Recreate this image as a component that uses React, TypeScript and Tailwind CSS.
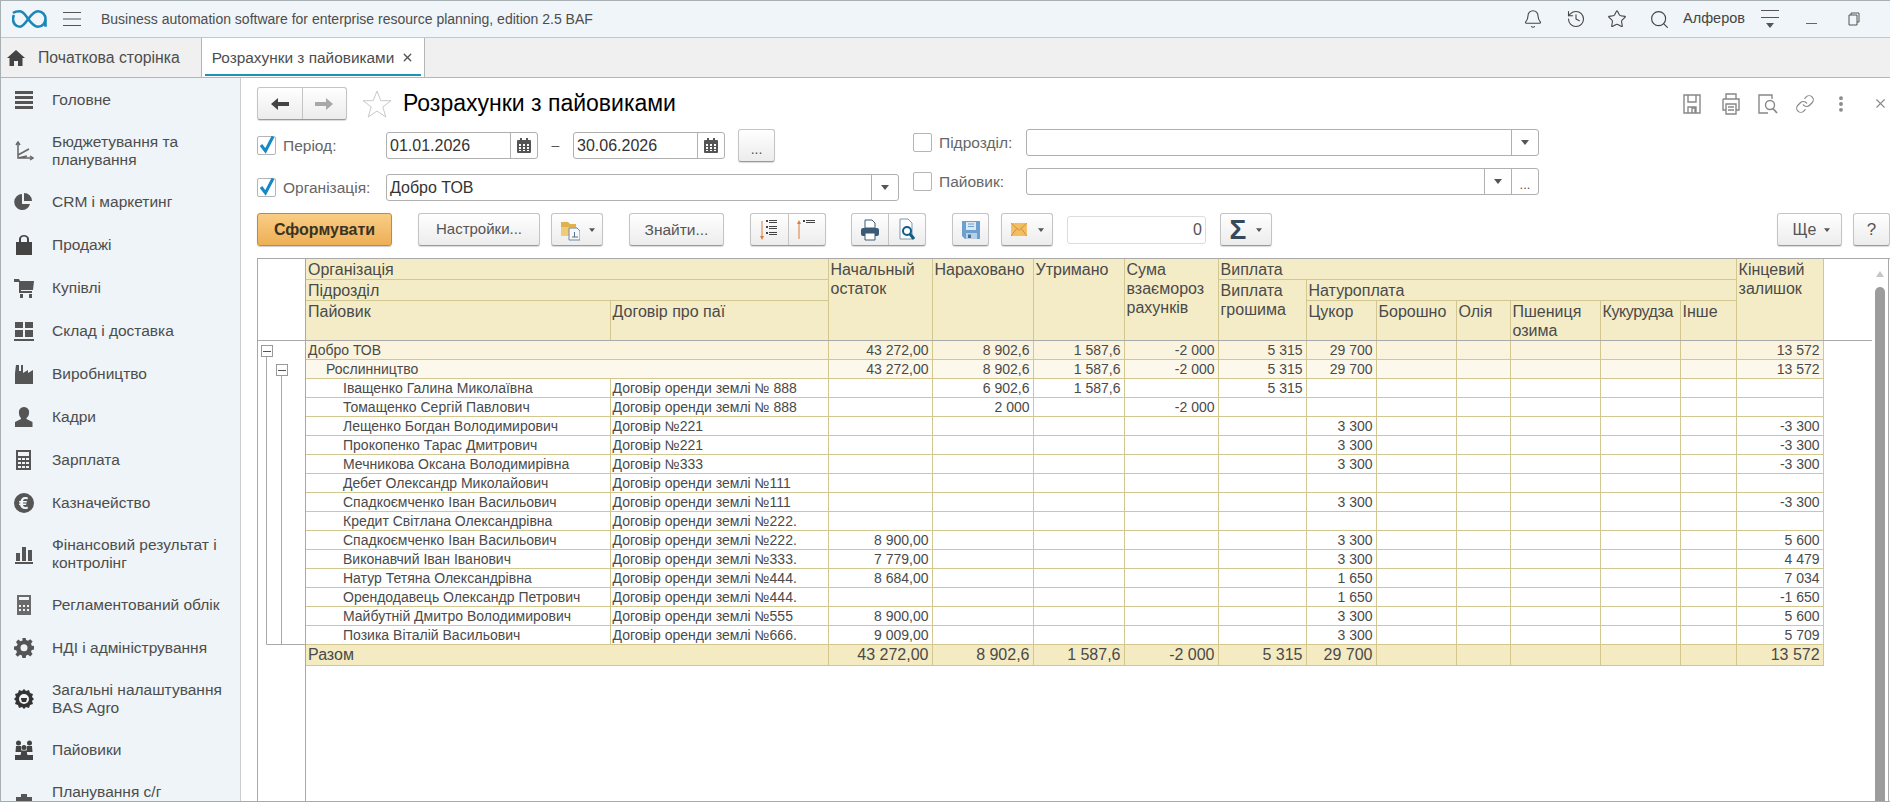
import { Bell, History, Link, MoreVertical, Search, Star, X } from 'lucide-react';

const font = { fontFamily: '"Liberation Sans", Arial, sans-serif' };

function Caret({ small }: { small?: boolean }) {
  return (
    <svg width={small ? 6 : 8} height={small ? 4 : 5} viewBox="0 0 8 5" className="shrink-0">
      <path d="M0 0h8L4 5z" fill="#555" />
    </svg>
  );
}

function Cal() {
  return (
    <svg width="14" height="15" viewBox="0 0 14 15">
      <path d="M1 2h2V0h2v2h4V0h2v2h2a1 1 0 0 1 1 1v11a1 1 0 0 1-1 1H1a1 1 0 0 1-1-1V3a1 1 0 0 1 1-1z" fill="#555" />
      <path d="M2 6h2v2H2zM6 6h2v2H6zM10 6h2v2h-2zM2 9h2v2H2zM6 9h2v2H6zM10 9h2v2h-2zM2 12h2v1H2zM6 12h2v1H6zM10 12h2v1h-2z" fill="#fff" />
    </svg>
  );
}

function Check({ on }: { on: boolean }) {
  return (
    <span className="relative block h-[19px] w-[19px] shrink-0 rounded-[2px] border border-[#b5b5b5] bg-white">
      {on && (
        <svg width="18" height="20" viewBox="0 0 18 20" className="absolute left-0 top-[-3px]">
          <path d="M3 11l4.500 6L15 2.500" fill="none" stroke="#1389c8" strokeWidth="3" />
        </svg>
      )}
    </span>
  );
}

const navIcons: Record<string, JSX.Element> = {
  menu: <path d="M1 1h18v3H1zM1 6h18v3H1zM1 11h18v3H1zM1 16h18v3H1z" fill="#555" />,
  chart: (
    <g fill="none" stroke="#666" strokeWidth="1.500">
      <path d="M4 1v16h15M4 14l11-6M4 17l9-2" />
      <path d="M2 4l2-3 2 3M16 15l3 2-3 2" />
    </g>
  ),
  pie: <path d="M8 2a8 8 0 1 0 8 10H8zM10 1v8h8a8 8 0 0 0-8-8z" fill="#555" />,
  bag: <path d="M2 7h3V4a5 4 0 0 1 10 0v3h3v13H2zM7 7h6V4a3 2.500 0 0 0-6 0z" fill="#444" fillRule="evenodd" />,
  cart: <path d="M0 1h5l1 2h14l-1 9H7v1h11v2H5V4H0zM6 16h3v4H6zM15 16h3v4h-3z" fill="#555" />,
  boxes: <path d="M1 1h8v6H1zM11 1h8v6h-8zM1 9h8v7H1zM11 9h8v7h-8zM0 18h20v2H0z" fill="#555" />,
  factory: <path d="M2 1h3v6h2V1h2v8l5-3v3l5-3v14H1V9z" fill="#555" />,
  user: <path d="M10 0a5 5 0 0 1 5 6c0 3-1.500 4-2.500 5v1l6 3v5H1v-5l6-3v-1C6 10 5 9 5 6a5 5 0 0 1 5-6z" fill="#555" />,
  calc: <path d="M2 0h15v20H2zM4 2v4h11V2zM4 8v2h3V8zM8 8v2h3V8zM12 8v2h3V8zM4 12v2h3v-2zM8 12v2h3v-2zM12 12v2h3v-2zM4 16v2h3v-2zM8 16v2h3v-2zM12 16v2h3v-2z" fill="#555" fillRule="evenodd" />,
  euro: <path d="M10 0a10 10 0 1 0 0 20 10 10 0 0 0 0-20zm1 4c2 0 3 .5 3 .5l-.6 2S12.500 6 11 6c-1 0-2 1-2 2h4l-.3 1.500H9v1h3.500L12 12H9c.3 1 1 2 2.500 2 1 0 2-.5 2-.5l.5 2s-1 .5-3 .5c-3 0-4.500-2-5-4H5v-1.500h1.200v-1H5V8h1.500C7 6 8.500 4 11 4z" fill="#555" fillRule="evenodd" />,
  bars: <path d="M2 9h4v8H2zM8 3h4v14H8zM14 6h4v11h-4zM1 18h18v2H1z" fill="#555" />,
  till: <path d="M3 0h14v20H3zM5 2v3h10V2zM5 10v2h2v-2zM9 10v2h2v-2zM13 10v2h2v-2zM5 14v2h2v-2zM9 14v2h2v-2zM13 14v2h2v-2z" fill="#6a6a6a" fillRule="evenodd" />,
  gear: <path d="M8.400 0h3.200l.5 2.800 1.900.8L16.300 2l2.300 2.300-1.600 2.300.8 1.900 2.800.5v3.200l-2.800.5-.8 1.900 1.600 2.300-2.300 2.300-2.300-1.600-1.900.8-.5 2.800H8.400l-.5-2.800-1.900-.8L3.700 19.600 1.400 17.300 3 15l-.8-1.900L0 12.600V9.400l2.800-.5L3.600 7 2 4.700 4.300 2.400 6.600 4l1.900-.8zM10 7a3.500 3.500 0 1 0 0 7 3.500 3.500 0 0 0 0-7z" fill="#555" fillRule="evenodd" transform="translate(0 -.8)" />,
  cog: <path d="M10 0l2 2 3-1 1 3 3 1-1 3 2 2-2 2 1 3-3 1-1 3-3-1-2 2-2-2-3 1-1-3-3-1 1-3-2-2 2-2-1-3 3-1 1-3 3 1zM10 5a5 5 0 1 0 0 10 5 5 0 0 0 0-10zM7 9h6v1l-1 3H8L7 10z" fill="#333" fillRule="evenodd" />,
  people: (
    <g fill="#444">
      <circle cx="4.500" cy="3" r="2.500" />
      <circle cx="15.500" cy="3" r="2.500" />
      <circle cx="10" cy="7.500" r="2.500" />
      <path d="M2 6h5l.5 6h-6zM13 6h5l.5 6h-6zM7.500 10.500h5l1 5h-7zM1 15h18v5H1z" />
    </g>
  ),
  plan: <path d="M2 6h16v8H2zM7 3h6v3H7z" fill="#555" />,
};

const navItems = [
  { label: 'Головне', icon: 'menu' },
  { label: 'Бюджетування та планування', icon: 'chart', two: true },
  { label: 'CRM і маркетинг', icon: 'pie' },
  { label: 'Продажі', icon: 'bag' },
  { label: 'Купівлі', icon: 'cart' },
  { label: 'Склад і доставка', icon: 'boxes' },
  { label: 'Виробництво', icon: 'factory' },
  { label: 'Кадри', icon: 'user' },
  { label: 'Зарплата', icon: 'calc' },
  { label: 'Казначейство', icon: 'euro' },
  { label: 'Фінансовий результат і контролінг', icon: 'bars', two: true },
  { label: 'Регламентований облік', icon: 'till' },
  { label: 'НДІ і адміністрування', icon: 'gear' },
  { label: 'Загальні налаштування BAS Agro', icon: 'cog', two: true },
  { label: 'Пайовики', icon: 'people' },
  { label: 'Планування с/г', icon: 'plan', two: true },
];

function Sidebar() {
  return (
    <aside className="h-full w-[240px] shrink-0 overflow-hidden border-r border-[#c9cdd0] bg-[#eef4f7] pl-[13px] text-[#4d4d4d]">
      {navItems.map((item) => (
        <div key={item.label} className={`flex items-center ${item.two ? 'h-[59px]' : 'h-[43px]'}`}>
          <svg width="20" height="20" viewBox="0 0 20 20" className="shrink-0">
            {navIcons[item.icon]}
          </svg>
          <span className={`ml-[18px] w-[185px] text-[15.5px] leading-[18px] ${item.two ? 'min-h-[36px]' : ''}`}>{item.label}</span>
        </div>
      ))}
    </aside>
  );
}

const btn =
  'flex h-[33px] items-center justify-center rounded-[3px] border border-[#c4c4c4] border-b-[#9a9a9a] bg-gradient-to-b from-white to-[#ececec] text-[#555] shadow-[0_1px_1px_rgba(0,0,0,0.15)]';

function FieldBox({ w, value, parts }: { w: string; value?: string; parts: JSX.Element[] }) {
  return (
    <div className={`flex h-[27px] shrink-0 items-stretch rounded-[3px] border border-[#b0b0b0] bg-white ${w}`}>
      <span className="flex-1 pl-[3px] text-[16px] leading-[26px] text-[#333]">{value}</span>
      {parts.map((p, i) => (
        <span key={i} className="flex w-[27px] items-center justify-center border-l border-[#b0b0b0]">
          {p}
        </span>
      ))}
    </div>
  );
}

const label = 'ml-[7px] pt-[1px] text-[15.5px] text-[#666]';

function Filters() {
  return (
    <div className="flex">
      <div className="w-[656px] shrink-0">
        <div className="flex h-[33px] items-center">
          <Check on />
          <span className={`${label} w-[103px]`}>Період:</span>
          <FieldBox w="w-[152px]" value="01.01.2026" parts={[<Cal key="c" />]} />
          <span className="w-[35px] text-center text-[14px] text-[#555]">–</span>
          <FieldBox w="w-[152px]" value="30.06.2026" parts={[<Cal key="c" />]} />
          <button className={`${btn} ml-[13px] w-[37px] pt-[6px] text-[14px] leading-none`}>...</button>
        </div>
        <div className="mt-[12px] flex h-[27px] items-center">
          <Check on />
          <span className={`${label} w-[103px]`}>Організація:</span>
          <FieldBox w="w-[513px]" value="Добро ТОВ" parts={[<Caret key="c" />]} />
        </div>
      </div>
      <div>
        <div className="flex h-[27px] items-center">
          <Check on={false} />
          <span className={`${label} w-[87px]`}>Підрозділ:</span>
          <FieldBox w="w-[513px]" parts={[<Caret key="c" />]} />
        </div>
        <div className="mt-[12px] flex h-[27px] items-center">
          <Check on={false} />
          <span className={`${label} w-[87px]`}>Пайовик:</span>
          <FieldBox w="w-[513px]" parts={[<Caret key="c" />, <span key="d" className="pt-[6px] text-[13px] leading-none text-[#555]">...</span>]} />
        </div>
      </div>
    </div>
  );
}

function SortIcon({ up }: { up?: boolean }) {
  return (
    <svg width="22" height="22" viewBox="0 0 22 22">
      <path d={up ? 'M3 20V4' : 'M4 2v16'} stroke="#e07b39" />
      <path d={up ? 'M3 1l-2 4h4z' : 'M4 21l-2-4h4z'} fill="#e07b39" />
      {up ? (
        <path d="M7 1h2v2H7zM10 1h9v1h-9zM10 3h9v1h-9z" fill="#444" />
      ) : (
        <path d="M8 1h2v2H8zM11 1h8v1h-8zM11 3h8v1h-8zM8 7h2v2H8zM11 7h8v1h-8zM11 9h8v1h-8zM8 13h2v2H8zM11 13h8v1h-8zM11 15h8v1h-8z" fill="#444" />
      )}
    </svg>
  );
}

function Printer() {
  return (
    <svg width="20" height="22" viewBox="0 0 20 22">
      <path d="M5 1h7l3 3v5H5z" fill="#fff" stroke="#3b5a75" />
      <rect x="1" y="9" width="18" height="8" rx="2" fill="#3b5a75" />
      <path d="M5 14h10v7H5z" fill="#fff" stroke="#3b5a75" />
    </svg>
  );
}

function Preview() {
  return (
    <svg width="20" height="24" viewBox="0 0 20 24">
      <path d="M3 1h8l4 4v16H3z" fill="#fff" stroke="#7d98ad" />
      <circle cx="10" cy="13" r="4" fill="none" stroke="#0f5e86" strokeWidth="2" />
      <path d="M13 16l4 5" stroke="#0f5e86" strokeWidth="3" />
    </svg>
  );
}

function Toolbar() {
  return (
    <div className="mt-[12px] flex h-[33px] items-center">
      <button className="flex h-[33px] w-[135px] items-center justify-center rounded-[3px] border border-[#c98a2c] bg-gradient-to-b from-[#f8cd85] to-[#eeaf55] text-[16px] font-bold text-[#3b3320] shadow-[0_1px_1px_rgba(0,0,0,0.2)]">
        Сформувати
      </button>
      <button className={`${btn} ml-[26px] w-[122px] text-[15px]`}>Настройки...</button>
      <button className={`${btn} ml-[11px] w-[52px] gap-[9px]`}>
        <svg width="20" height="22" viewBox="0 0 20 22">
          <path d="M1 3h7l2 2h6v4H1z" fill="#e2b04c" />
          <path d="M1 8h16v9H1z" fill="#f2cb78" />
          <path d="M9 9h8l3 3v9H9z" fill="#f6f8fa" stroke="#6f8aa0" />
          <path d="M14.500 13v5M12 18h6" stroke="#56738a" />
        </svg>
        <Caret small />
      </button>
      <button className={`${btn} ml-[26px] w-[95px] text-[15.5px]`}>Знайти...</button>
      <div className={`${btn} ml-[26px] w-[76px] overflow-hidden`}>
        <span className="flex h-full flex-1 items-center justify-center border-r border-[#c4c4c4]"><SortIcon /></span>
        <span className="flex h-full flex-1 items-center justify-center"><SortIcon up /></span>
      </div>
      <div className={`${btn} ml-[25px] w-[75px] overflow-hidden`}>
        <span className="flex h-full flex-1 items-center justify-center border-r border-[#c4c4c4]"><Printer /></span>
        <span className="flex h-full flex-1 items-center justify-center"><Preview /></span>
      </div>
      <button className={`${btn} ml-[26px] w-[37px]`}>
        <svg width="18" height="18" viewBox="0 0 18 18">
          <path d="M0 0h18v18H3l-3-3z" fill="#6d9fd0" />
          <path d="M4 1h10v8H4z" fill="#dce9f5" />
          <path d="M6 3h6M6 5.500h6" stroke="#6d9fd0" />
          <path d="M4 12h11v6H4z" fill="#b9cfe3" />
          <path d="M6 13.500h3v3.500H6z" fill="#4c6f91" />
        </svg>
      </button>
      <button className={`${btn} ml-[12px] w-[52px] gap-[11px]`}>
        <svg width="16" height="13" viewBox="0 0 17 14">
          <rect width="17" height="14" fill="#f3be62" />
          <path d="M0 0l8.500 8L17 0M0 14l6-8M17 14l-6-8" fill="none" stroke="#c98f3a" />
        </svg>
        <Caret small />
      </button>
      <div className="ml-[14px] h-[28px] w-[139px] rounded-[3px] border border-[#dcdcdc] bg-white pr-[3px] text-right text-[16px] leading-[26px] text-[#555]">0</div>
      <button className={`${btn} ml-[14px] w-[52px] gap-[10px]`}>
        <span className="text-[28px] font-bold leading-none text-[#36495a]">Σ</span>
        <Caret small />
      </button>
      <button className={`${btn} ml-auto w-[65px] gap-[8px] pl-[4px]`}>
        <span className="text-[16px]">Ще</span>
        <Caret small />
      </button>
      <button className={`${btn} ml-[11px] w-[37px] text-[17px]`}>?</button>
    </div>
  );
}

const colW = [304, 218, 104, 101, 91, 94, 88, 70, 80, 54, 90, 80, 56, 87];
type Row = { name: string; indent: number; doc?: string; v: string[]; kind?: 'g1' | 'g2' };
const blank = (cyk: string, end: string, first = '', n = '', u = '', s = '', g = '') => [first, n, u, s, g, cyk, '', '', '', '', '', end];

const rows: Row[] = [
  { name: 'Добро ТОВ', indent: 2, kind: 'g1', v: blank('29 700', '13 572', '43 272,00', '8 902,6', '1 587,6', '-2 000', '5 315') },
  { name: 'Рослинництво', indent: 20, kind: 'g2', v: blank('29 700', '13 572', '43 272,00', '8 902,6', '1 587,6', '-2 000', '5 315') },
  { name: 'Іващенко Галина Миколаївна', doc: 'Договір оренди землі № 888', indent: 37, v: blank('', '', '', '6 902,6', '1 587,6', '', '5 315') },
  { name: 'Томащенко Сергій Павлович', doc: 'Договір оренди землі № 888', indent: 37, v: blank('', '', '', '2 000', '', '-2 000') },
  { name: 'Лещенко Богдан Володимирович', doc: 'Договір №221', indent: 37, v: blank('3 300', '-3 300') },
  { name: 'Прокопенко Тарас Дмитрович', doc: 'Договір №221', indent: 37, v: blank('3 300', '-3 300') },
  { name: 'Мечникова Оксана Володимирівна', doc: 'Договір №333', indent: 37, v: blank('3 300', '-3 300') },
  { name: 'Дебет Олександр Миколайович', doc: 'Договір оренди землі №111', indent: 37, v: blank('', '') },
  { name: 'Спадкоємченко Іван Васильович', doc: 'Договір оренди землі №111', indent: 37, v: blank('3 300', '-3 300') },
  { name: 'Кредит Світлана Олександрівна', doc: 'Договір оренди землі №222.', indent: 37, v: blank('', '') },
  { name: 'Спадкоємченко Іван Васильович', doc: 'Договір оренди землі №222.', indent: 37, v: blank('3 300', '5 600', '8 900,00') },
  { name: 'Виконавчий Іван Іванович', doc: 'Договір оренди землі №333.', indent: 37, v: blank('3 300', '4 479', '7 779,00') },
  { name: 'Натур Тетяна Олександрівна', doc: 'Договір оренди землі №444.', indent: 37, v: blank('1 650', '7 034', '8 684,00') },
  { name: 'Орендодавець Олександр Петрович', doc: 'Договір оренди землі №444.', indent: 37, v: blank('1 650', '-1 650') },
  { name: 'Майбутній Дмитро Володимирович', doc: 'Договір оренди землі №555', indent: 37, v: blank('3 300', '5 600', '8 900,00') },
  { name: 'Позика Віталій Васильович', doc: 'Договір оренди землі №666.', indent: 37, v: blank('3 300', '5 709', '9 009,00') },
];

const totals = ['43 272,00', '8 902,6', '1 587,6', '-2 000', '5 315', '29 700', '', '', '', '', '', '13 572'];

const th = 'border-b border-r border-[#d2c88f] bg-[#f4ecc6] pl-[2px] pr-[3px] pt-[1px] align-top text-left text-[16px] font-normal leading-[19px] text-[#4a4a4a]';
const td = 'h-[19px] overflow-hidden whitespace-nowrap border-b border-r border-[#d2c88f] pl-[2px] pr-[3px] text-[14px] leading-[18px] text-[#4a4a4a]';

function ReportTable() {
  return (
    <table className="table-fixed border-collapse" style={{ width: colW.reduce((a, b) => a + b, 0) }}>
      <colgroup>
        {colW.map((w, i) => (
          <col key={i} style={{ width: w }} />
        ))}
      </colgroup>
      <thead>
        <tr className="h-[20px]">
          <th colSpan={2} className={th}>Організація</th>
          <th rowSpan={3} className={th}>Начальный остаток</th>
          <th rowSpan={3} className={th}>Нараховано</th>
          <th rowSpan={3} className={th}>Утримано</th>
          <th rowSpan={3} className={`${th} pr-0`}>Сума взаємороз рахунків</th>
          <th colSpan={7} className={th}>Виплата</th>
          <th rowSpan={3} className={th}>Кінцевий залишок</th>
        </tr>
        <tr className="h-[21px]">
          <th colSpan={2} className={th}>Підрозділ</th>
          <th rowSpan={2} className={th}>Виплата грошима</th>
          <th colSpan={6} className={th}>Натуроплата</th>
        </tr>
        <tr className="h-[40px]">
          <th className={th}>Пайовик</th>
          <th className={th}>Договір про паї</th>
          <th className={th}>Цукор</th>
          <th className={th}>Борошно</th>
          <th className={th}>Олія</th>
          <th className={th}>Пшениця озима</th>
          <th className={`${th} tracking-[-0.4px]`}>Кукурудза</th>
          <th className={th}>Інше</th>
        </tr>
      </thead>
      <tbody>
        {rows.map((r, i) => (
          <tr key={i} className={r.kind === 'g1' ? 'bg-[#faf4de]' : r.kind === 'g2' ? 'bg-[#fcf8ec]' : 'bg-white'}>
            {r.kind ? (
              <td colSpan={2} className={td} style={{ paddingLeft: r.indent }}>{r.name}</td>
            ) : (
              <>
                <td className={td} style={{ paddingLeft: r.indent }}>{r.name}</td>
                <td className={td}>{r.doc}</td>
              </>
            )}
            {r.v.map((c, j) => (
              <td key={j} className={`${td} text-right`}>{c}</td>
            ))}
          </tr>
        ))}
        <tr className="h-[21px] bg-[#f4ebc3]">
          <td colSpan={2} className={`${td} text-[16px]`}>Разом</td>
          {totals.map((c, j) => (
            <td key={j} className={`${td} text-right text-[16px]`}>{c}</td>
          ))}
        </tr>
      </tbody>
    </table>
  );
}

function TreeGutter() {
  return (
    <div className="h-full w-[48px] shrink-0 border-r border-[#a9a9a9]">
      <svg width="47" height="400">
        <path d="M8.500 97V385.500H47M23.500 116V385.500" fill="none" stroke="#a9a9a9" />
        <rect x="3.500" y="86.500" width="11" height="11" fill="#fff" stroke="#999" />
        <path d="M5 92.500h8" stroke="#555" />
        <rect x="18.500" y="105.500" width="11" height="11" fill="#fff" stroke="#999" />
        <path d="M20 111.500h8" stroke="#555" />
      </svg>
    </div>
  );
}

export default function App() {
  return (
    <div style={font} className="flex h-[802px] w-[1890px] flex-col overflow-hidden border-l border-t border-[#a9b0b4] bg-white">
      <header className="flex h-[37px] shrink-0 items-center border-b border-[#c3c7c9] bg-[#eff5f8] text-[#444]">
        <svg width="36" height="18" viewBox="0 0 36 18" className="ml-[11px]">
          <path d="M1 3C3 1.500 5 1.300 8 1.300 14 1.300 18 16.700 26 16.700 30.500 16.700 33.500 13 33.500 9 33.500 5 30.500 1.300 26 1.300 18 1.300 14 16.700 8 16.700 3.500 16.700 1 13 1 9 1 7.500 1.500 6 2 5M33.500 9V16.700" fill="none" stroke="#1a87b8" strokeWidth="2.600" />
        </svg>
        <svg width="18" height="16" viewBox="0 0 18 16" className="ml-[15px]">
          <path d="M0 1.500h18M0 8h18M0 14.500h18" stroke="#555" strokeWidth="1.200" />
        </svg>
        <span className="ml-[20px] text-[14px] text-[#4d4d4d]">Business automation software for enterprise resource planning, edition 2.5 BAF</span>
        <div className="ml-auto flex items-center text-[#444]">
          <Bell size={20} strokeWidth={1.300} />
          <History size={20} strokeWidth={1.300} className="ml-[23px]" />
          <Star size={20} strokeWidth={1.300} className="ml-[21px]" />
          <Search size={21} strokeWidth={1.300} className="ml-[22px]" />
          <span className="ml-[13px] text-[14.5px]">Алферов</span>
          <svg width="18" height="20" viewBox="0 0 18 20" className="ml-[16px]">
            <path d="M0 1.500h18M0 8.500h18" stroke="#555" />
            <path d="M5 14h8l-4 5z" fill="#555" />
          </svg>
          <span className="ml-[27px] mt-[8px] h-[1px] w-[11px] bg-[#666]" />
          <svg width="12" height="14" viewBox="0 0 12 14" className="ml-[31px] mr-[30px]">
            <path d="M3 3V1h8v9H9M1 3h8v10H1z" fill="none" stroke="#555" />
          </svg>
        </div>
      </header>
      <div className="flex h-[40px] shrink-0 border-b border-[#b5b5b5] bg-[#f0f0f0] text-[#4d4d4d]">
        <div className="flex w-[201px] items-center border-r border-[#b5b5b5] pl-[6px] text-[15.8px]">
          <svg width="18" height="16" viewBox="0 0 18 16">
            <path d="M9 0l9 8h-2.500v8H11v-5H7v5H2.500V8H0z" fill="#444" />
          </svg>
          <span className="ml-[13px] whitespace-nowrap">Початкова сторінка</span>
        </div>
        <div className="relative flex w-[223px] items-center justify-center gap-[7px] border-r border-[#b5b5b5] bg-white text-[15.4px]">
          <span className="whitespace-nowrap">Розрахунки з пайовиками</span>
          <X size={13} strokeWidth={2.600} className="shrink-0 text-[#555]" />
          <span className="absolute bottom-[1px] left-[3px] right-[3px] h-[2px] bg-[#1b93b5]" />
        </div>
      </div>
      <div className="flex min-h-0 flex-1">
        <Sidebar />
        <main className="flex min-w-0 flex-1 flex-col pl-[16px] pt-[10px]">
          <div className="flex h-[31px] shrink-0 items-center">
            <div className={`${btn} h-[31px] w-[90px] overflow-hidden`}>
              <span className="flex h-full flex-1 items-center justify-center border-r border-[#c4c4c4]">
                <svg width="18" height="12" viewBox="0 0 18 12"><path d="M0 6l7-6v4h11v4H7v4z" fill="#444" /></svg>
              </span>
              <span className="flex h-full flex-1 items-center justify-center">
                <svg width="18" height="12" viewBox="0 0 18 12"><path d="M18 6l-7-6v4H0v4h11v4z" fill="#a8a8a8" /></svg>
              </span>
            </div>
            <svg width="30" height="28" viewBox="0 0 30 28" className="ml-[15px]">
              <path d="M15 1l3.800 9.700H29l-8.200 6.200 3 10.100-8.800-6-8.800 6 3-10.100L1 10.700h10.200z" fill="#fff" stroke="#c9c9c9" />
            </svg>
            <h1 className="ml-[11px] text-[23px] font-normal text-black">Розрахунки з пайовиками</h1>
            <div className="ml-auto mr-[2px] flex items-center text-[#888]">
              <svg width="20" height="20" viewBox="0 0 20 20"><path d="M2 1h16v18H2zM6 1v7h8V1M6 19v-6h8v6M10 14h3v5h-3z" fill="none" stroke="#888" strokeWidth="1.400" /></svg>
              <svg width="20" height="22" viewBox="0 0 20 22" className="ml-[19px]"><path d="M5 6V1h10v5M2 6h16v11h-3M5 17H2V6M5 11h10v10H5zM7 14h6M7 17h6" fill="none" stroke="#888" strokeWidth="1.400" /></svg>
              <svg width="20" height="20" viewBox="0 0 20 20" className="ml-[17px]"><path d="M10 19H1V1h13v4" fill="none" stroke="#888" strokeWidth="1.400" /><circle cx="12" cy="11" r="4.500" fill="none" stroke="#888" strokeWidth="1.400" /><path d="M15 14.500l4 4.500" stroke="#888" strokeWidth="1.800" /></svg>
              <Link size={20} strokeWidth={1.400} className="ml-[17px]" />
              <MoreVertical size={20} strokeWidth={2.600} className="ml-[16px]" />
              <X size={15} strokeWidth={1.800} className="ml-[22px]" />
            </div>
          </div>
          <div className="mt-[10px] shrink-0"><Filters /></div>
          <div className="shrink-0"><Toolbar /></div>
          <div className="relative mt-[12px] flex min-h-0 flex-1 border-l border-t border-[#a9a9a9]">
            <TreeGutter />
            <div className="min-w-0 flex-1">
              <ReportTable />
            </div>
            <div className="mr-[1px] flex w-[17px] shrink-0 flex-col items-center border-r border-[#a9a9a9]">
              <svg width="8" height="6" viewBox="0 0 8 6" className="mt-[12px]"><path d="M4 0l4 6H0z" fill="#c6c6c6" /></svg>
              <div className="mt-[10px] w-[10px] flex-1 rounded-t-[5px] bg-[#9c9c9c]" />
            </div>
            <div className="absolute left-0 right-[18px] top-[81px] h-[1px] bg-[#a9a9a9]" />
          </div>
        </main>
      </div>
      <div className="h-[1px] shrink-0 bg-[#a9a9a9]" />
    </div>
  );
}
